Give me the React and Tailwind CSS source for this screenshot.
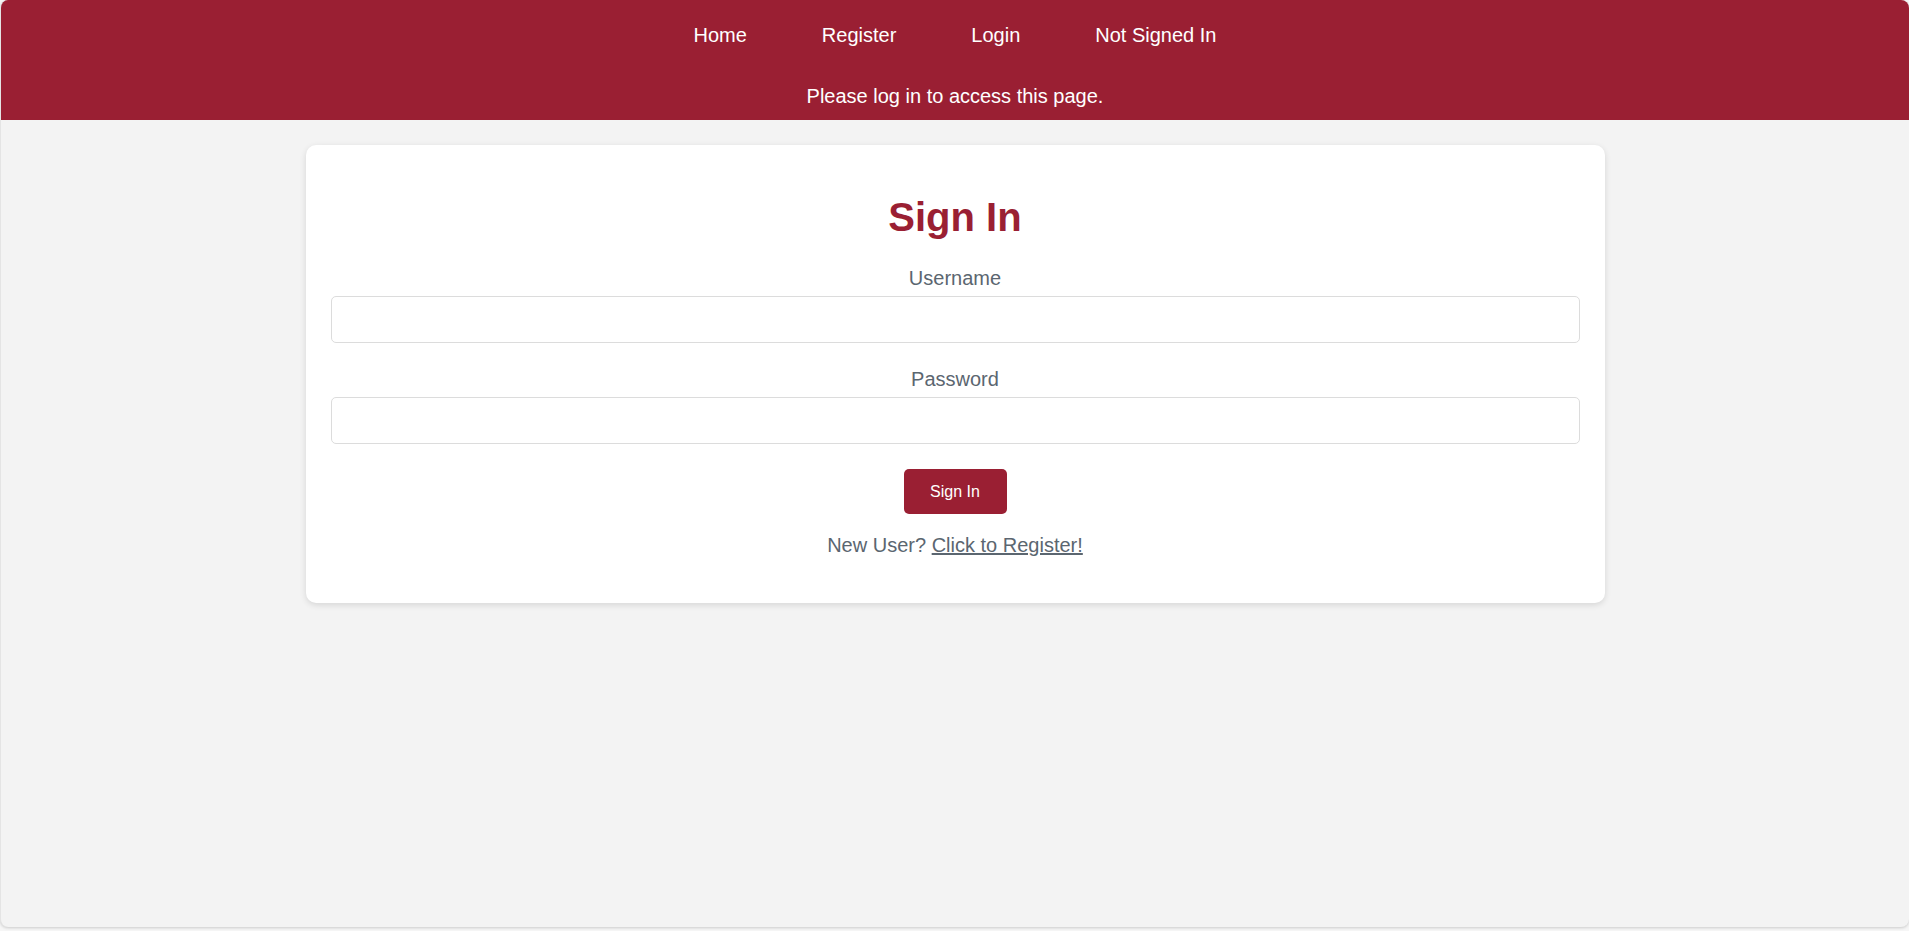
export default function App() {
  const font = { fontFamily: '"Liberation Sans", Arial, sans-serif' };
  return (
    <div className="h-[931px] w-full bg-[#f6f6f6]" style={font}>
      <div className="h-[927px] w-full rounded-[8px] overflow-hidden bg-[#f3f3f3] shadow-[0_1px_3px_rgba(0,0,0,0.18)] border-l border-[#e4e4e4]">
        <header className="h-[120px] bg-[#9a1f33] text-white flex flex-col items-center">
          <nav className="flex gap-[75px] pt-[24px] text-[20px] leading-[23px]">
            <a className="cursor-pointer">Home</a>
            <a className="cursor-pointer">Register</a>
            <a className="cursor-pointer">Login</a>
            <a className="cursor-pointer">Not Signed In</a>
          </nav>
          <p className="mt-[38px] text-[20px] leading-[23px]">Please log in to access this page.</p>
        </header>
        <main className="flex justify-center pt-[25px]">
          <div className="w-[1299px] bg-white rounded-[10px] shadow-[0_2px_6px_rgba(0,0,0,0.12)] px-[25px] pt-[49px] pb-[46px] flex flex-col items-center">
            <h1 className="text-[40px] leading-[46px] font-bold text-[#9a1f33]">Sign In</h1>
            <label className="mt-[27px] text-[20px] leading-[23px] text-[#5b6670]">Username</label>
            <input type="text" className="mt-[6px] w-full h-[47px] border border-[#dcdcdc] rounded-[5px] bg-white outline-none px-3" />
            <label className="mt-[25px] text-[20px] leading-[23px] text-[#5b6670]">Password</label>
            <input type="password" className="mt-[6px] w-full h-[47px] border border-[#dcdcdc] rounded-[5px] bg-white outline-none px-3" />
            <button className="mt-[25px] w-[103px] h-[45px] rounded-[5px] bg-[#9a1f33] text-white text-[16px]">Sign In</button>
            <p className="mt-[20px] text-[20px] leading-[23px] text-[#5b6670]">
              New User? <a className="underline cursor-pointer">Click to Register!</a>
            </p>
          </div>
        </main>
      </div>
    </div>
  );
}
